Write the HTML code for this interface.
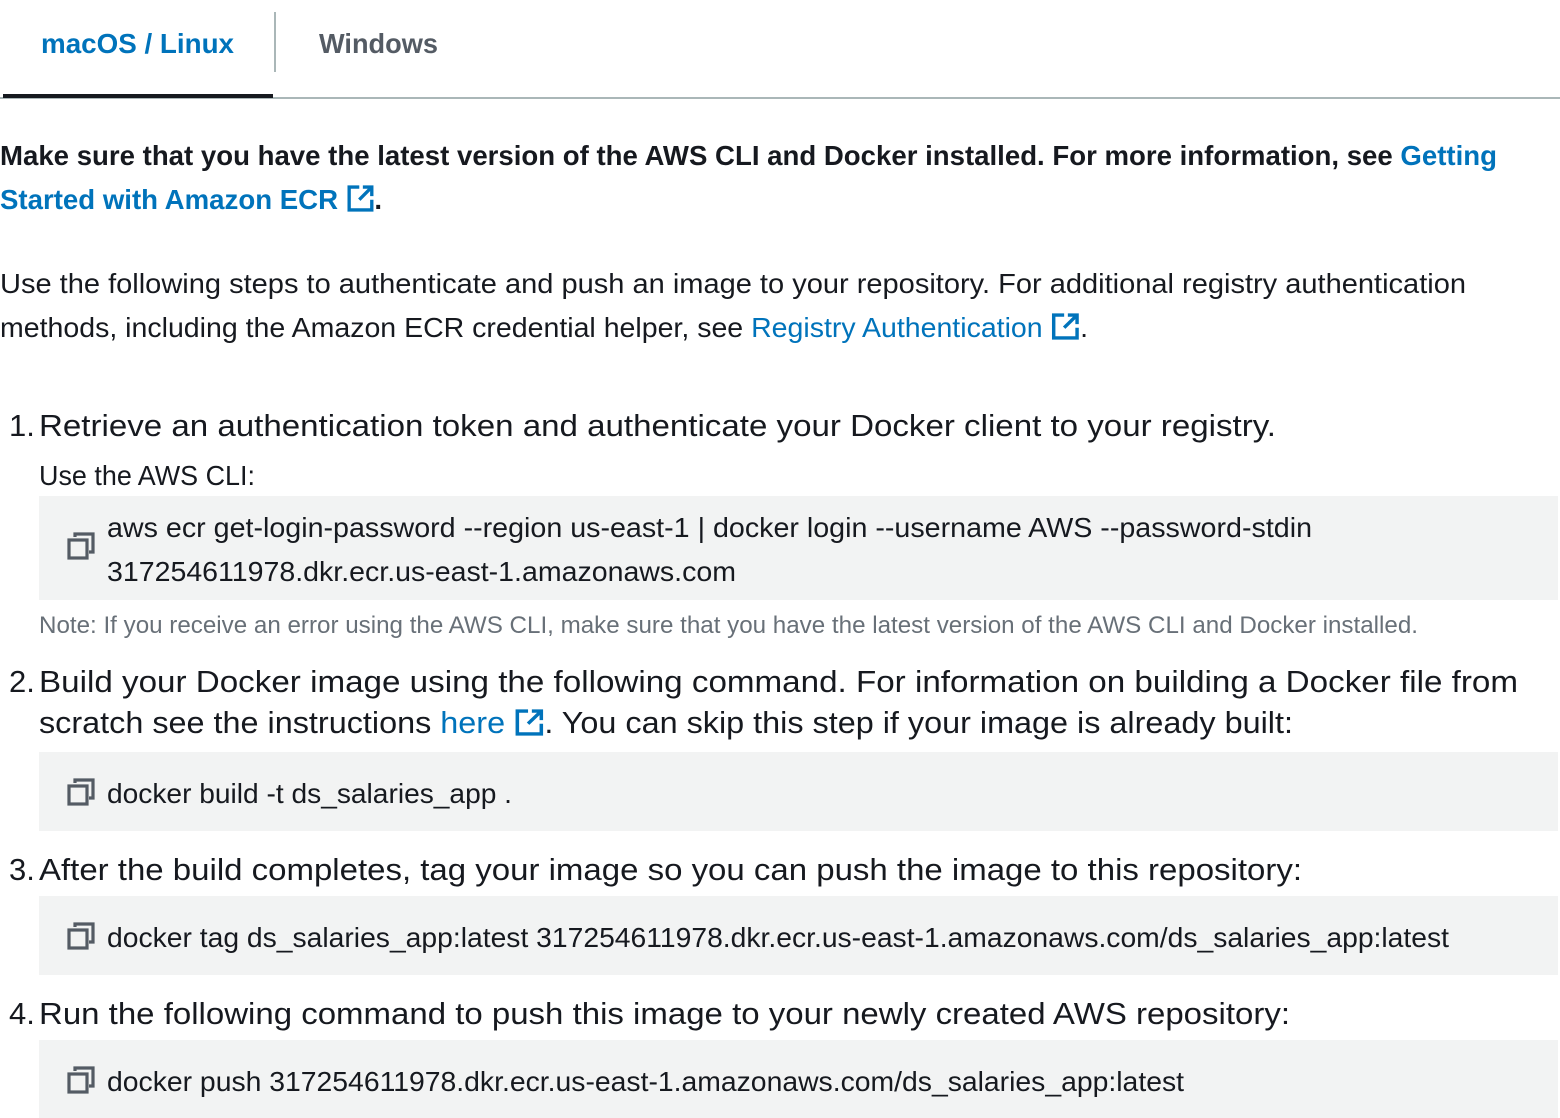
<!DOCTYPE html>
<html><head><meta charset="utf-8">
<style>
html,body{margin:0;padding:0;background:#fff;width:1560px;height:1118px;overflow:hidden;position:relative;font-family:"Liberation Sans",sans-serif;color:#16191f}
.l{position:absolute;white-space:nowrap;transform-origin:0 50%;height:40px;line-height:42px}
.b{font-weight:bold}
.a{color:#0073bb}
.box{position:absolute;left:39px;width:1519px;background:#f2f3f3}
.ic{display:inline-block;vertical-align:-4px}
.cp{position:absolute;left:66px;width:30px;height:30px}
</style></head><body>
<div class="l b a" style="left:41px;top:23px;font-size:28px" w="193">macOS / Linux</div>
<div class="l b" style="left:319px;top:23px;font-size:28px;color:#545b64" w="119">Windows</div>
<div style="position:absolute;left:274px;top:12px;width:2px;height:60px;background:#aab7b8"></div>
<div style="position:absolute;left:0;top:97px;width:1560px;height:2px;background:#aab7b8"></div>
<div style="position:absolute;left:3px;top:94px;width:270px;height:4px;background:#16191f"></div>

<div class="l b" style="left:0;top:135px;font-size:28px" w="1497">Make sure that you have the latest version of the AWS CLI and Docker installed. For more information, see <span class="a">Getting</span></div>
<div class="l b" style="left:0;top:179px;font-size:28px" w="382"><span class="a">Started with Amazon ECR <svg class="ic" width="29" height="29" viewBox="0 0 24 24" fill="none" stroke="#0073bb" stroke-width="2.8"><path d="M11 2.5H2.5v19h19V13M14 2.5h7.5V10M21.5 2.5L11 13"/></svg></span>.</div>

<div class="l" style="left:0;top:263px;font-size:28px" w="1466">Use the following steps to authenticate and push an image to your repository. For additional registry authentication</div>
<div class="l" style="left:0;top:307px;font-size:28px" w="1088">methods, including the Amazon ECR credential helper, see <span class="a">Registry Authentication <svg class="ic" width="29" height="29" viewBox="0 0 24 24" fill="none" stroke="#0073bb" stroke-width="2.8"><path d="M11 2.5H2.5v19h19V13M14 2.5h7.5V10M21.5 2.5L11 13"/></svg></span>.</div>

<div class="l" style="left:9px;top:405px;font-size:31px">1.</div>
<div class="l" style="left:39px;top:405px;font-size:31px" w="1237">Retrieve an authentication token and authenticate your Docker client to your registry.</div>
<div class="l" style="left:39px;top:455px;font-size:28px" w="216">Use the AWS CLI:</div>
<div class="box" style="top:496px;height:104px"></div>
<svg class="cp" style="top:531px" viewBox="0 0 30 30" fill="none" stroke="#545b64" stroke-width="3.2"><path d="M9 6V3h18v18h-4"/><rect x="3" y="9" width="18" height="18"/></svg>
<div class="l" style="left:107px;top:507px;font-size:28px" w="1205">aws ecr get-login-password --region us-east-1 | docker login --username AWS --password-stdin</div>
<div class="l" style="left:107px;top:551px;font-size:28px" w="629">317254611978.dkr.ecr.us-east-1.amazonaws.com</div>
<div class="l" style="left:39px;top:605px;font-size:24px;color:#687078" w="1379">Note: If you receive an error using the AWS CLI, make sure that you have the latest version of the AWS CLI and Docker installed.</div>

<div class="l" style="left:9px;top:661px;font-size:31px">2.</div>
<div class="l" style="left:39px;top:661px;font-size:31px" w="1479">Build your Docker image using the following command. For information on building a Docker file from</div>
<div class="l" style="left:39px;top:702px;font-size:31px" w="1254">scratch see the instructions <span class="a">here <svg class="ic" width="29" height="29" viewBox="0 0 24 24" fill="none" stroke="#0073bb" stroke-width="2.8"><path d="M11 2.5H2.5v19h19V13M14 2.5h7.5V10M21.5 2.5L11 13"/></svg></span>. You can skip this step if your image is already built:</div>
<div class="box" style="top:752px;height:79px"></div>
<svg class="cp" style="top:777px" viewBox="0 0 30 30" fill="none" stroke="#545b64" stroke-width="3.2"><path d="M9 6V3h18v18h-4"/><rect x="3" y="9" width="18" height="18"/></svg>
<div class="l" style="left:107px;top:773px;font-size:28px" w="405">docker build -t ds_salaries_app .</div>

<div class="l" style="left:9px;top:849px;font-size:31px">3.</div>
<div class="l" style="left:39px;top:849px;font-size:31px" w="1263">After the build completes, tag your image so you can push the image to this repository:</div>
<div class="box" style="top:896px;height:79px"></div>
<svg class="cp" style="top:921px" viewBox="0 0 30 30" fill="none" stroke="#545b64" stroke-width="3.2"><path d="M9 6V3h18v18h-4"/><rect x="3" y="9" width="18" height="18"/></svg>
<div class="l" style="left:107px;top:917px;font-size:28px" w="1342">docker tag ds_salaries_app:latest 317254611978.dkr.ecr.us-east-1.amazonaws.com/ds_salaries_app:latest</div>

<div class="l" style="left:9px;top:993px;font-size:31px">4.</div>
<div class="l" style="left:39px;top:993px;font-size:31px" w="1251">Run the following command to push this image to your newly created AWS repository:</div>
<div class="box" style="top:1040px;height:78px"></div>
<svg class="cp" style="top:1065px" viewBox="0 0 30 30" fill="none" stroke="#545b64" stroke-width="3.2"><path d="M9 6V3h18v18h-4"/><rect x="3" y="9" width="18" height="18"/></svg>
<div class="l" style="left:107px;top:1061px;font-size:28px" w="1077">docker push 317254611978.dkr.ecr.us-east-1.amazonaws.com/ds_salaries_app:latest</div>

<script>
document.querySelectorAll('[w]').forEach(function(e){
  var t=parseFloat(e.getAttribute('w'));var w=e.getBoundingClientRect().width;
  if(w>0)e.style.transform='scaleX('+(t/w)+')';
});
</script>
</body></html>
